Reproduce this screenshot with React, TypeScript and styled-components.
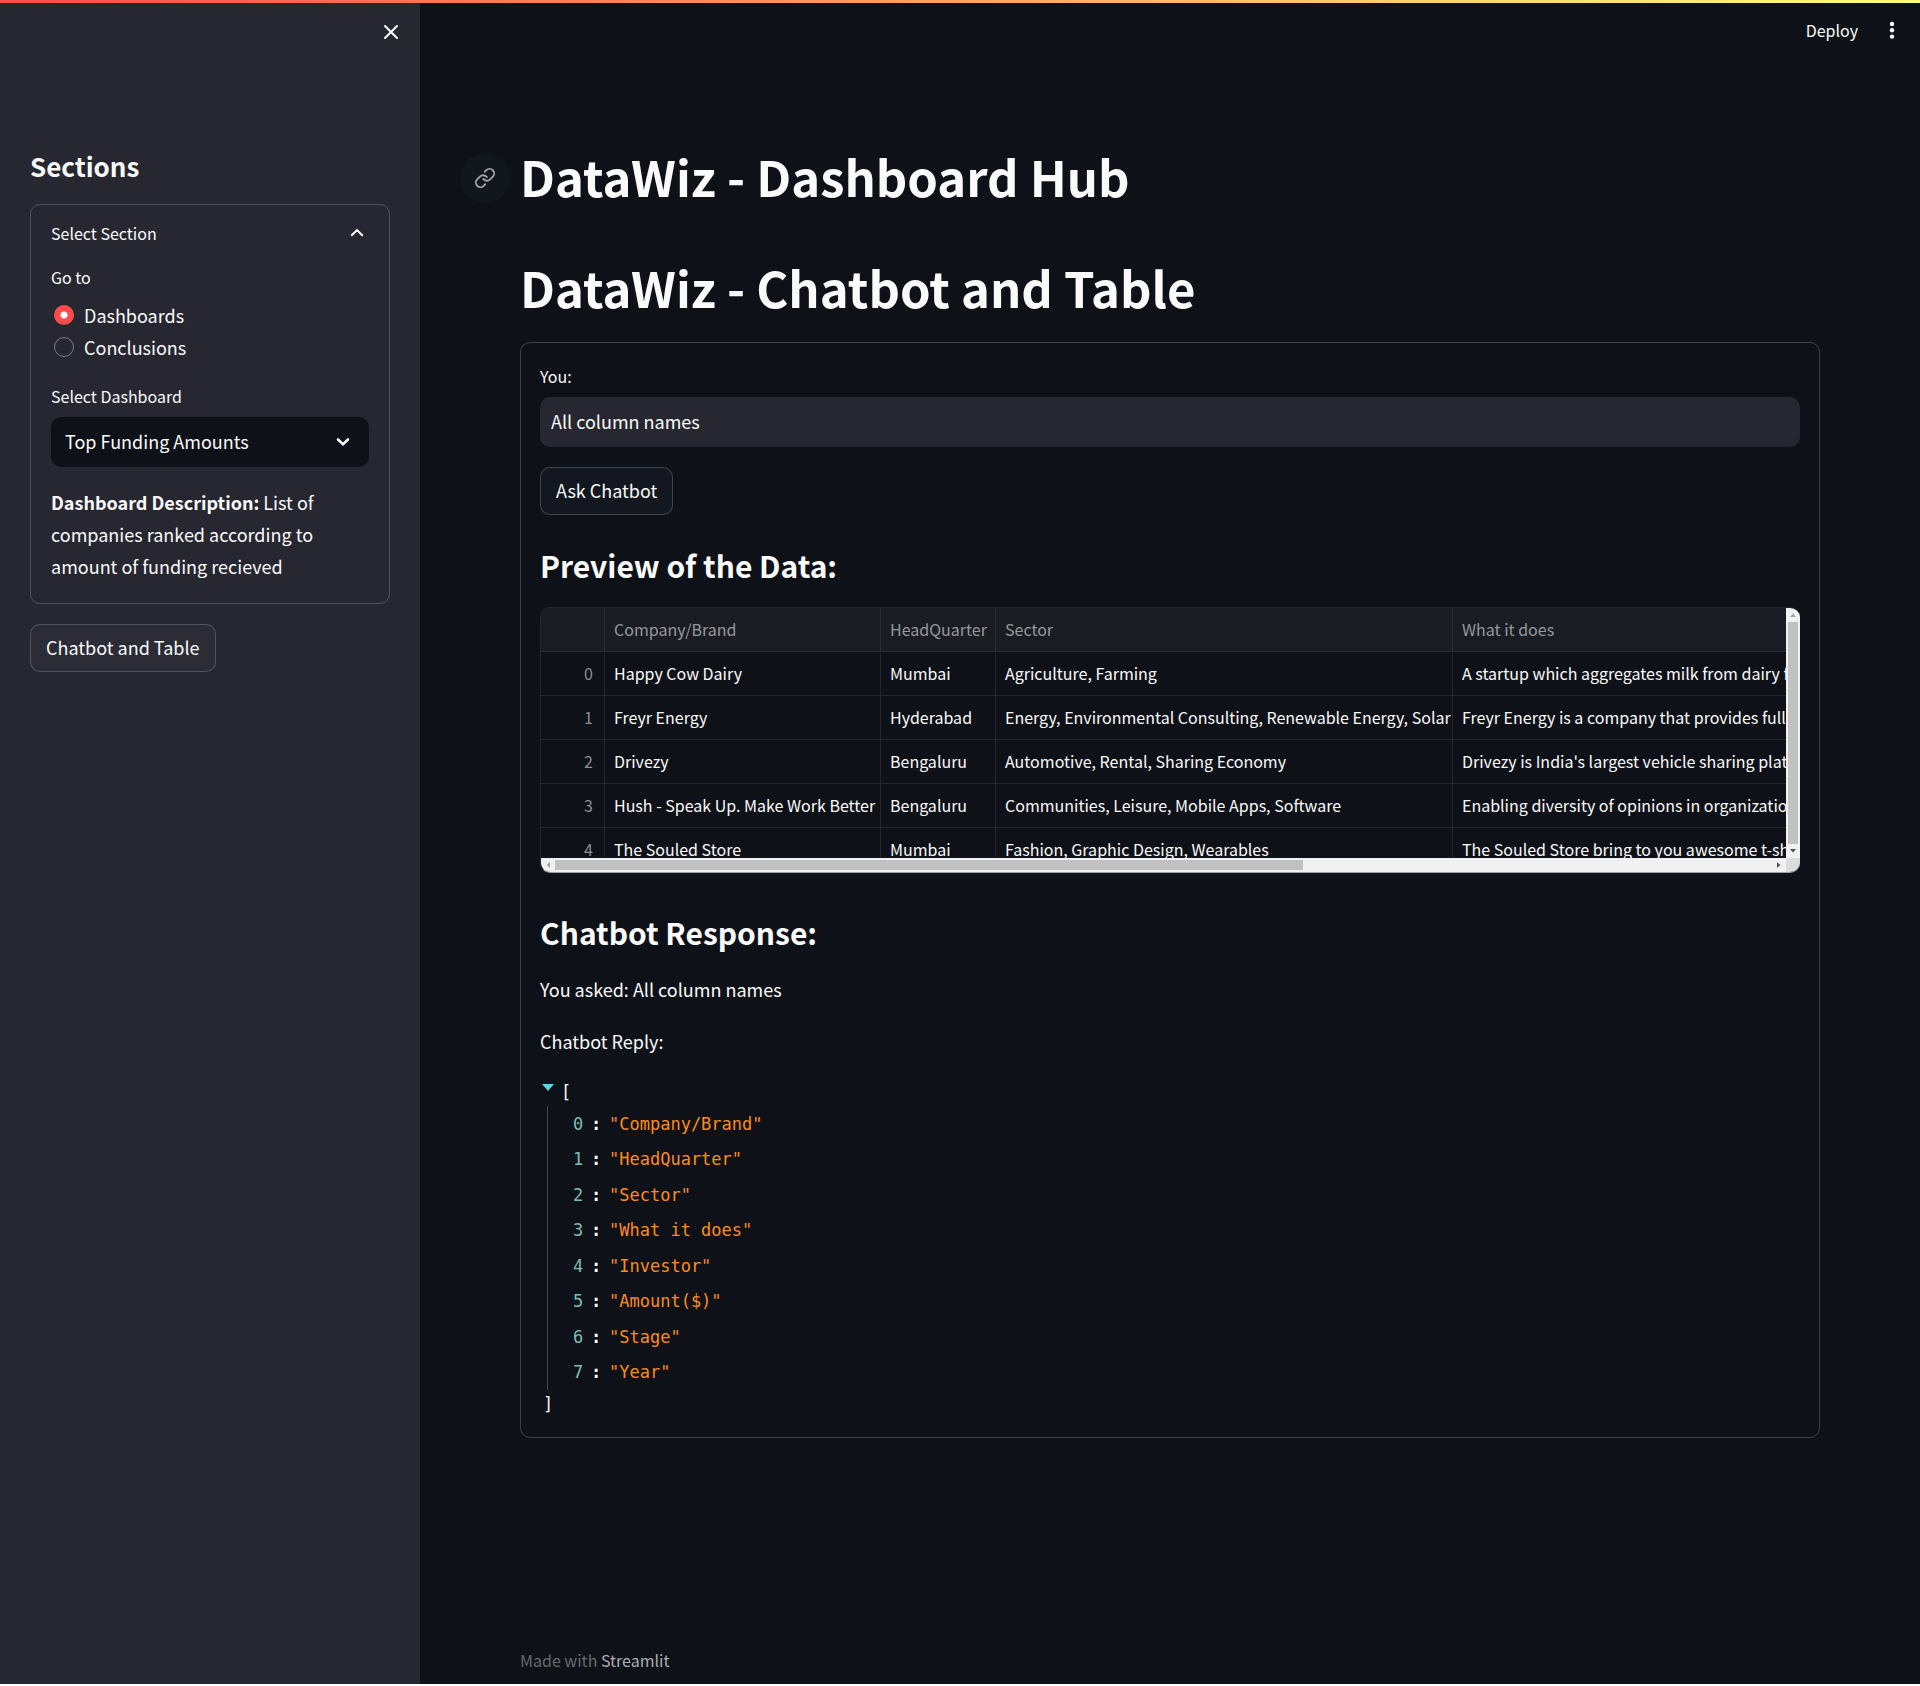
import React, { useState } from "react";
import styled, { createGlobalStyle } from "styled-components";

const sans = `"Noto Sans CJK SC", "Noto Sans", sans-serif`;
const mono = `"DejaVu Sans Mono", "Liberation Mono", monospace`;
const ink = "#fafafa";
const night = "#0e1117";
const slate = "#262730";
const line = "rgba(250, 250, 250, 0.2)";

const GlobalStyle = createGlobalStyle`
  *, *::before, *::after { box-sizing: border-box; }
  body {
    margin: 0;
    background: #ffffff;
    color: ${ink};
    font: 400 18px/32px ${sans};
  }
  h1, h2, p, ul { margin: 0; padding: 0; }
  button, input, select { font: inherit; color: inherit; }
`;

const Page = styled.div`
  display: flex;
  min-height: calc(100vh - 2px);
  background: ${night};
`;

const Decoration = styled.div`
  position: absolute;
  top: 0;
  left: 0;
  right: 0;
  height: 3px;
  background: linear-gradient(90deg, #ff4b4b, #fffd80);
`;

const Sidebar = styled.aside`
  flex: 0 0 420px;
  background: ${slate};
  padding: 0 30px;
`;

const SidebarTop = styled.div`
  display: flex;
  justify-content: flex-end;
  align-items: flex-start;
  height: 148px;
  padding-top: 20px;
  margin-right: -13px;
`;

const IconButton = styled.button`
  display: flex;
  align-items: center;
  justify-content: center;
  width: 24px;
  height: 24px;
  padding: 0;
  border: 0;
  background: none;
  cursor: pointer;
`;

const SidebarTitle = styled.h2`
  font-size: 26px;
  line-height: 36px;
  font-weight: 600;
  margin-bottom: 20px;
`;

const Expander = styled.section`
  border: 1px solid ${line};
  border-radius: 10px;
  padding: 0 20px 21px;
  margin-bottom: 20px;
`;

const ExpanderToggle = styled.button`
  display: flex;
  align-items: center;
  justify-content: space-between;
  width: 100%;
  height: 56px;
  margin-bottom: 4px;
  padding: 0 5px 0 0;
  border: 0;
  background: none;
  font-size: 16px;
  line-height: 25px;
  cursor: pointer;
`;

const RadioGroup = styled.fieldset`
  margin: 0 0 20px;
  padding: 0;
  border: 0;
`;

const Legend = styled.legend`
  padding: 0;
  margin-bottom: 9px;
  font-size: 16px;
  line-height: 25px;
`;

const FieldLabel = styled.label`
  display: block;
  margin-bottom: 7px;
  font-size: 16px;
  line-height: 27px;
`;

const RadioRow = styled.label`
  display: flex;
  align-items: center;
  gap: 10px;
  padding-left: 3px;
  cursor: pointer;
`;

const Radio = styled.input`
  appearance: none;
  width: 20px;
  height: 20px;
  margin: 0;
  border: 1px solid rgba(250, 250, 250, 0.4);
  border-radius: 50%;
  &:checked {
    border: 0;
    background: radial-gradient(circle, #ffffff 3px, #ff4b4b 4px);
  }
`;

const SelectWrap = styled.div`
  display: grid;
  align-items: center;
  margin-bottom: 19px;
  > * { grid-area: 1 / 1; }
  > svg {
    justify-self: end;
    margin-right: 19px;
    pointer-events: none;
  }
`;

const Select = styled.select`
  appearance: none;
  width: 100%;
  height: 50px;
  padding: 0 14px 2px;
  border: 0;
  border-radius: 10px;
  background: ${night};
`;

const Button = styled.button<{ $fill: string }>`
  height: 48px;
  padding: 0 15px 2px;
  border: 1px solid ${line};
  border-radius: 10px;
  background: ${(p) => p.$fill};
  line-height: 32px;
  cursor: pointer;
`;

const Main = styled.main`
  flex: 1;
  min-width: 0;
  display: flex;
  flex-direction: column;
`;

const Toolbar = styled.header`
  display: flex;
  align-items: center;
  justify-content: flex-end;
  gap: 22px;
  height: 60px;
  padding-right: 16px;
`;

const DeployButton = styled.button`
  padding: 0;
  border: 0;
  background: none;
  font-size: 16px;
  line-height: 24px;
  cursor: pointer;
`;

const Content = styled.div`
  flex: 1;
  padding: 83px 100px 0;
`;

const TitleRow = styled.div`
  display: flex;
  align-items: center;
  gap: 10px;
  margin: 0 0 45px -60px;
`;

const Anchor = styled.a`
  display: flex;
  align-items: center;
  justify-content: center;
  width: 50px;
  height: 50px;
  margin-top: 4px;
  border-radius: 50%;
  background: #12161d;
  color: #a3a5a8;
`;

const Title = styled.h1`
  font-size: 49px;
  line-height: 66px;
  font-weight: 700;
`;

const Card = styled.section`
  margin-top: 22px;
  padding: 20px 19px 19px;
  border: 1px solid ${line};
  border-radius: 10px;
`;

const TextInput = styled.input`
  display: block;
  width: 100%;
  height: 50px;
  margin-bottom: 20px;
  padding: 0 11px 2px;
  border: 0;
  border-radius: 10px;
  background: ${slate};
`;

const Heading = styled.h2`
  margin-top: 29px;
  font-size: 30px;
  line-height: 42px;
  font-weight: 600;
`;

const TableFrame = styled.div`
  display: grid;
  grid-template-columns: minmax(0, 1fr) 14px;
  grid-template-rows: 250px 14px;
  margin: 21px 0 38px;
  border: 1px solid #24262b;
  border-bottom-color: #a0a0a4;
  border-right: 0;
  border-radius: 10px;
  overflow: hidden;
`;

const TableView = styled.div`
  overflow: hidden;
`;

const Table = styled.table`
  width: 100%;
  table-layout: fixed;
  border-collapse: separate;
  border-spacing: 0;
  font-size: 16px;
  line-height: 24px;
  white-space: nowrap;
`;

const Th = styled.th`
  height: 44px;
  padding: 0 9px 1px;
  overflow: hidden;
  border: solid #2a2d34;
  border-width: 0 1px 1px 0;
  background: #1a1c24;
  color: #979899;
  font-weight: 400;
  text-align: left;
  &:last-child { border-right: 0; }
`;

const Td = styled.td<{ $index?: boolean }>`
  height: 44px;
  padding: 0 ${(p) => (p.$index ? 11 : 9)}px 2px;
  overflow: hidden;
  border: solid #24262b;
  border-width: 0 1px 1px 0;
  color: ${(p) => (p.$index ? "#8b8c8f" : ink)};
  text-align: ${(p) => (p.$index ? "right" : "left")};
  &:last-child { border-right: 0; }
`;

const Scrollbar = styled.div<{ $vertical?: boolean }>`
  display: flex;
  flex-direction: ${(p) => (p.$vertical ? "column" : "row")};
  justify-content: space-between;
  background: #f1f1f1;
`;

const Track = styled.div<{ $vertical?: boolean }>`
  flex: 1;
  display: flex;
  padding: ${(p) => (p.$vertical ? "0 2px" : "2px 0")};
`;

const Thumb = styled.div<{ $width: string }>`
  width: ${(p) => p.$width};
  background: #c1c1c1;
`;

const Corner = styled.div`
  background: #dcdcdc;
`;

const Message = styled.p`
  margin-top: 20px;
`;

const Json = styled.div`
  margin-top: 21px;
  font-family: ${mono};
  font-size: 17px;
  line-height: 28px;
`;

const JsonOpen = styled.div`
  display: flex;
  gap: 7px;
  padding-left: 2px;
  > svg { margin-top: 6px; }
`;

const JsonList = styled.ul`
  display: grid;
  align-items: center;
  min-height: 284px;
  margin-left: 7px;
  padding-left: 25px;
  border-left: 1px solid #46484c;
  list-style: none;
`;

const JsonItem = styled.li`
  display: flex;
  color: #fd8b19;
`;

const JsonKey = styled.span`
  width: 18px;
  color: #7ebdb6;
`;

const JsonColon = styled.span`
  width: 18px;
  color: ${ink};
  font-weight: 700;
`;

const JsonClose = styled.div`
  padding-left: 3px;
`;

const Footer = styled.footer`
  padding: 0 100px 12px;
  color: #67696d;
  font-size: 16px;
  line-height: 24px;
`;

const FooterLink = styled.a`
  color: #adaeb0;
  text-decoration: none;
`;

const CloseIcon = () => (
  <svg width="16" height="16" viewBox="0 0 16 16" stroke={ink} strokeWidth="2" strokeLinecap="round" aria-hidden="true">
    <path d="M2 2 14 14M14 2 2 14" />
  </svg>
);

const Chevron = ({ up = false }: { up?: boolean }) => (
  <svg width="14" height="10" viewBox="0 0 14 10" fill="none" stroke={ink} strokeWidth={up ? 2 : 2.6} strokeLinecap={up ? "butt" : "round"} aria-hidden="true">
    <path d={up ? "M1.2 7.8 7 2.2 12.8 7.8" : "M2 2.5 7 7.2 12 2.5"} />
  </svg>
);

const DotsIcon = () => (
  <svg width="20" height="20" viewBox="0 0 20 20" fill={ink} aria-hidden="true">
    <circle cx="10" cy="4" r="2.2" />
    <circle cx="10" cy="10.3" r="2.2" />
    <circle cx="10" cy="16.6" r="2.2" />
  </svg>
);

const LinkIcon = () => (
  <svg width="22" height="22" viewBox="0 0 24 24" fill="none" stroke="currentColor" strokeWidth="2" strokeLinecap="round" strokeLinejoin="round" aria-hidden="true">
    <path d="M10 13a5 5 0 0 0 7.54.54l3-3a5 5 0 0 0-7.07-7.07l-1.72 1.71" />
    <path d="M14 11a5 5 0 0 0-7.54-.54l-3 3a5 5 0 0 0 7.07 7.07l1.71-1.71" />
  </svg>
);

const Arrow = ({ turn, fill }: { turn: number; fill: string }) => (
  <svg width="14" height="14" viewBox="0 0 14 14" fill={fill} aria-hidden="true">
    <path d="M4 9 7 5.6 10 9Z" transform={`rotate(${turn} 7 7)`} />
  </svg>
);

const columns = ["Company/Brand", "HeadQuarter", "Sector", "What it does"];

const rows = [
  ["Happy Cow Dairy", "Mumbai", "Agriculture, Farming", "A startup which aggregates milk from dairy farmers"],
  ["Freyr Energy", "Hyderabad", "Energy, Environmental Consulting, Renewable Energy, Solar", "Freyr Energy is a company that provides full service"],
  ["Drivezy", "Bengaluru", "Automotive, Rental, Sharing Economy", "Drivezy is India's largest vehicle sharing platform"],
  ["Hush - Speak Up. Make Work Better", "Bengaluru", "Communities, Leisure, Mobile Apps, Software", "Enabling diversity of opinions in organizations"],
  ["The Souled Store", "Mumbai", "Fashion, Graphic Design, Wearables", "The Souled Store bring to you awesome t-shirts"],
];

const names = ["Company/Brand", "HeadQuarter", "Sector", "What it does", "Investor", "Amount($)", "Stage", "Year"];

const sections = ["Dashboards", "Conclusions"];

export default function App() {
  const [section, setSection] = useState(sections[0]);
  const [question, setQuestion] = useState("All column names");

  return (
    <>
      <GlobalStyle />
      <Page>
        <Sidebar>
          <SidebarTop>
            <IconButton aria-label="Close sidebar">
              <CloseIcon />
            </IconButton>
          </SidebarTop>
          <SidebarTitle>Sections</SidebarTitle>
          <Expander>
            <ExpanderToggle aria-expanded="true">
              Select Section
              <Chevron up />
            </ExpanderToggle>
            <RadioGroup>
              <Legend>Go to</Legend>
              {sections.map((name) => (
                <RadioRow key={name}>
                  <Radio type="radio" name="section" checked={section === name} onChange={() => setSection(name)} />
                  {name}
                </RadioRow>
              ))}
            </RadioGroup>
            <FieldLabel htmlFor="dashboard">Select Dashboard</FieldLabel>
            <SelectWrap>
              <Select id="dashboard">
                <option>Top Funding Amounts</option>
              </Select>
              <Chevron />
            </SelectWrap>
            <p>
              <strong>Dashboard Description:</strong> List of companies ranked according to amount of funding recieved
            </p>
          </Expander>
          <Button $fill="#2b2c36">Chatbot and Table</Button>
        </Sidebar>

        <Main>
          <Toolbar>
            <DeployButton>Deploy</DeployButton>
            <IconButton aria-label="Main menu">
              <DotsIcon />
            </IconButton>
          </Toolbar>
          <Content>
            <TitleRow id="hub">
              <Anchor href="#hub" aria-label="Link to heading">
                <LinkIcon />
              </Anchor>
              <Title>DataWiz - Dashboard Hub</Title>
            </TitleRow>
            <Title>DataWiz - Chatbot and Table</Title>

            <Card>
              <FieldLabel htmlFor="question">You:</FieldLabel>
              <TextInput id="question" value={question} onChange={(e) => setQuestion(e.target.value)} />
              <Button $fill="#131720">Ask Chatbot</Button>

              <Heading>Preview of the Data:</Heading>
              <TableFrame>
                <TableView>
                  <Table>
                    <colgroup>
                      <col width="64" />
                      <col width="276" />
                      <col width="115" />
                      <col width="457" />
                      <col />
                    </colgroup>
                    <thead>
                      <tr>
                        <Th aria-label="Row" />
                        {columns.map((name) => (
                          <Th key={name}>{name}</Th>
                        ))}
                      </tr>
                    </thead>
                    <tbody>
                      {rows.map((row, i) => (
                        <tr key={row[0]}>
                          <Td $index>{i}</Td>
                          {row.map((cell) => (
                            <Td key={cell}>{cell}</Td>
                          ))}
                        </tr>
                      ))}
                    </tbody>
                  </Table>
                </TableView>
                <Scrollbar $vertical>
                  <Arrow turn={0} fill="#a3a3a3" />
                  <Track $vertical>
                    <Thumb $width="100%" />
                  </Track>
                  <Arrow turn={180} fill="#505050" />
                </Scrollbar>
                <Scrollbar>
                  <Arrow turn={-90} fill="#a3a3a3" />
                  <Track>
                    <Thumb $width="61.5%" />
                  </Track>
                  <Arrow turn={90} fill="#505050" />
                </Scrollbar>
                <Corner />
              </TableFrame>

              <Heading>Chatbot Response:</Heading>
              <Message>You asked: All column names</Message>
              <Message>Chatbot Reply:</Message>
              <Json>
                <JsonOpen>
                  <svg width="12" height="7" viewBox="0 0 12 7" fill="#5cd3e6" aria-hidden="true">
                    <path d="M0 0H12L6 7Z" />
                  </svg>
                  [
                </JsonOpen>
                <JsonList>
                  {names.map((name, i) => (
                    <JsonItem key={name}>
                      <JsonKey>{i}</JsonKey>
                      <JsonColon>:</JsonColon>
                      {`"${name}"`}
                    </JsonItem>
                  ))}
                </JsonList>
                <JsonClose>]</JsonClose>
              </Json>
            </Card>
          </Content>
          <Footer>
            Made with <FooterLink href="#streamlit">Streamlit</FooterLink>
          </Footer>
        </Main>
      </Page>
      <Decoration />
    </>
  );
}
